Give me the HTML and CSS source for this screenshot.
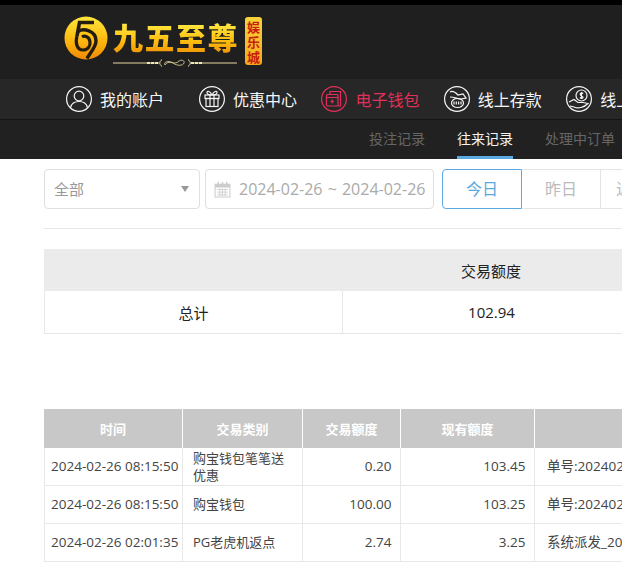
FILE: index.html
```html
<!DOCTYPE html>
<html lang="zh">
<head>
<meta charset="utf-8">
<title>往来记录</title>
<link rel="stylesheet" href="styles.css">
</head>
<body>
<div class="page">
  <header class="brand">
    <svg class="logo-mark" viewBox="0 0 44 44" width="44" height="44">
      <defs>
        <linearGradient id="g" x1="0" y1="0" x2="0" y2="1">
          <stop offset="0" stop-color="#ffe83c"/>
          <stop offset="0.55" stop-color="#fdb80f"/>
          <stop offset="1" stop-color="#f08a05"/>
        </linearGradient>
      </defs>
      <circle cx="22" cy="22" r="21.500" fill="url(#g)"/>
      <path d="M30 6.500H15.500L13 20" fill="none" stroke="#241c10" stroke-width="3.600"/>
      <path d="M14 15.500C19 12 32 14 32 25C32 31 26 37 23 42.500" fill="none" stroke="#241c10" stroke-width="3.400"/>
      <path d="M13 20C11 27 13 34 19 34C24 34 26.500 30 26 26C25.500 21 21 19 18 21" fill="none" stroke="#241c10" stroke-width="3.200"/>
    </svg>
    <div class="logo-words">
      <div class="logo-name">九五至尊</div>
      <svg class="logo-flourish" viewBox="0 0 124 8" width="124" height="8">
        <path d="M0 4H46M78 4H124" stroke="#e8d9a0" stroke-width="1"/>
        <path d="M34 4H46M78 4H90" stroke="#f3e7b5" stroke-width="2" stroke-dasharray="3 1"/>
        <path d="M49 0.500C46 3 46 5 49 7.500M75 0.500C78 3 78 5 75 7.500" fill="none" stroke="#e8d9a0"/>
        <path d="M52 6C55 0 62 7 66 2C69 0 72 2 71 4C70 7 64 7 60 4C56 1 50 3 52 6Z" fill="none" stroke="#e8d9a0" stroke-width="0.800"/>
      </svg>
    </div>
    <div class="logo-badge">娱乐城</div>
  </header>

  <nav class="main-nav">
    <a class="nav-item nav-item-first">
      <svg class="nav-icon" viewBox="0 0 26 26"><circle cx="13" cy="13" r="12.400"/><circle cx="13" cy="10" r="4.800"/><path d="M4.600 21.500C5.500 17.500 9 15.500 13 15.500S20.500 17.500 21.400 21.500"/></svg>
      <span>我的账户</span>
    </a>
    <a class="nav-item">
      <svg class="nav-icon" viewBox="0 0 26 26"><circle cx="13" cy="13" r="12.400"/><rect x="6" y="9" width="14" height="3.500"/><rect x="7" y="12.500" width="12" height="8"/><path d="M11 9V20.500M15 9V20.500M13 9C11 5 8 4.500 8 6.500S11 9 13 9C15 9 18 8.500 18 6.500S15 5 13 9"/></svg>
      <span>优惠中心</span>
    </a>
    <a class="nav-item nav-item-active">
      <svg class="nav-icon" viewBox="0 0 26 26"><circle cx="13" cy="13" r="12.400"/><path d="M9 8V5.500H19.500V20H17"/><rect x="5.500" y="8.500" width="11.500" height="11.500" rx="1"/><path d="M5.500 11.500H17M11.200 13.500V17.500M9.500 15.500H13"/></svg>
      <span>电子钱包</span>
    </a>
    <a class="nav-item">
      <svg class="nav-icon" viewBox="0 0 26 26"><circle cx="13" cy="13" r="12.400"/><path d="M6 6C9 4 12 7 14 9L19 8L22 12L17 13C14 13 10 11 6 11"/><ellipse cx="13.500" cy="17" rx="6" ry="4.500"/><path d="M10 15.500V18.500M12.300 15.500V18.500M14.600 15.500V18.500M17 15.500V18.500"/></svg>
      <span>线上存款</span>
    </a>
    <a class="nav-item">
      <svg class="nav-icon" viewBox="0 0 26 26"><circle cx="13" cy="13" r="12.400"/><circle cx="15.500" cy="9.500" r="5.500"/><path d="M15.500 6V13M17.200 7.500C16 6.500 14 7 14.200 8.500S17.200 10 17 11.500S15 12.500 13.800 11.500"/><path d="M3 16L8 13.500L12 16.500L17 16.500L22 17.500C18 21.500 12 23 8 21L4 20"/></svg>
      <span>线上取款</span>
    </a>
  </nav>

  <nav class="sub-nav">
    <a class="sub-item">投注记录</a>
    <a class="sub-item sub-item-active">往来记录</a>
    <a class="sub-item">处理中订单</a>
  </nav>

  <main class="content">
    <div class="filters">
      <div class="select">
        <span>全部</span>
        <i class="caret"></i>
      </div>
      <div class="date-range">
        <svg class="cal" viewBox="0 0 16 16" width="17" height="17">
          <path d="M1 3H15V15H1Z" fill="none" stroke="#ccc"/>
          <path d="M1 3H15V6H1Z" fill="#ccc"/>
          <path d="M4 1V4M8 1V4M12 1V4" stroke="#ccc" stroke-width="1.400"/>
          <path d="M3 8H13M3 10.500H13M3 13H13M5.500 7V14M8 7V14M10.500 7V14" stroke="#ccc" stroke-width="0.800"/>
        </svg>
        <span>2024-02-26 ~ 2024-02-26</span>
      </div>
      <div class="range-tabs">
        <div class="range-tab range-tab-on">今日</div>
        <div class="range-tab">昨日</div>
        <div class="range-tab">近七日</div>
      </div>
    </div>

    <hr class="rule">

    <table class="summary">
      <tr>
        <th></th>
        <th>交易额度</th>
      </tr>
      <tr>
        <td>总计</td>
        <td>102.94</td>
      </tr>
    </table>

    <table class="records">
      <colgroup>
        <col class="c-time"><col class="c-type"><col class="c-amount"><col class="c-balance"><col class="c-note">
      </colgroup>
      <tr>
        <th>时间</th><th>交易类别</th><th>交易额度</th><th>现有额度</th><th></th>
      </tr>
      <tr>
        <td>2024-02-26 08:15:50</td>
        <td class="type tight">购宝钱包笔笔送优惠</td>
        <td class="num">0.20</td>
        <td class="num">103.45</td>
        <td class="note">单号:20240226081550</td>
      </tr>
      <tr>
        <td>2024-02-26 08:15:50</td>
        <td class="type">购宝钱包</td>
        <td class="num">100.00</td>
        <td class="num">103.25</td>
        <td class="note">单号:20240226081550</td>
      </tr>
      <tr>
        <td>2024-02-26 02:01:35</td>
        <td class="type">PG老虎机返点</td>
        <td class="num">2.74</td>
        <td class="num">3.25</td>
        <td class="note">系统派发_20240226</td>
      </tr>
    </table>
  </main>
</div>
</body>
</html>
```

FILE: styles.css
```css
* { box-sizing: border-box; }

html, body {
  margin: 0;
  padding: 0;
  background: #fff;
  overflow: hidden;
}

body {
  font-family: "Open Sans", "Noto Sans CJK SC", sans-serif;
  width: 622px;
  height: 570px;
}

.page {
  width: 622px;
  height: 570px;
  overflow: hidden;
}

.brand {
  display: flex;
  align-items: flex-start;
  height: 79px;
  padding: 11px 0 0 64px;
  background: #1f1f1f;
  border-top: 5px solid #000;
}

.logo-mark { flex: none; }

.logo-words {
  margin-left: 5px;
  width: 128px;
}

.logo-name {
  height: 40px;
  font-family: "Noto Sans CJK SC", sans-serif;
  font-weight: 900;
  font-size: 30px;
  line-height: 40px;
  letter-spacing: 1.500px;
  white-space: nowrap;
  background: linear-gradient(#ffe840 20%, #ffc010 60%, #f09a08 90%);
  -webkit-background-clip: text;
  background-clip: text;
  color: transparent;
}

.logo-flourish {
  display: block;
  margin-top: 3px;
}

.logo-badge {
  width: 17px;
  height: 48px;
  margin: 1px 0 0 4px;
  border-radius: 3px;
  background: linear-gradient(#f9d43c, #f6a81c);
  color: #c8200c;
  font-family: "Noto Sans CJK SC", sans-serif;
  font-weight: 700;
  font-size: 13px;
  line-height: 15px;
  text-align: center;
  padding-top: 2px;
}

.main-nav {
  display: flex;
  gap: 24.400px;
  height: 41px;
  padding: 0 0 0 66px;
  align-items: center;
  background: #272727;
  border-bottom: 1px solid #151515;
  white-space: nowrap;
}

.nav-item {
  display: flex;
  flex: none;
  align-items: center;
  gap: 8px;
  font-family: "Noto Sans CJK SC", sans-serif;
  font-size: 16px;
  color: #f6f6f6;
}

.nav-item-first { margin-right: 10.600px; }

.nav-item-active { color: #e0305a; }

.nav-icon {
  flex: none;
  width: 26px;
  height: 26px;
  fill: none;
  stroke: currentColor;
  stroke-width: 1.200;
}

.sub-nav {
  display: flex;
  gap: 32px;
  height: 39px;
  padding-left: 369px;
  background: #212121;
  white-space: nowrap;
}

.sub-item {
  flex: none;
  font-family: "Noto Sans CJK SC", sans-serif;
  font-size: 14px;
  line-height: 37px;
  color: #666;
}

.sub-item-active {
  color: #f4f4f4;
  border-bottom: 3px solid #5aa9e0;
}

.content {
  width: 700px;
  padding: 10px 0 0 44px;
  color: #333;
}

.filters {
  display: flex;
  height: 40px;
}

.select, .date-range {
  display: flex;
  align-items: center;
  height: 40px;
  border: 1px solid #dfdfdf;
  border-radius: 4px;
  color: #aaa;
}

.select {
  justify-content: space-between;
  width: 156px;
  padding: 0 10px 2px 9px;
  color: #999;
  font-size: 15px;
}

.caret {
  width: 0;
  height: 0;
  margin-top: 2px;
  border-left: 4px solid transparent;
  border-right: 4px solid transparent;
  border-top: 6px solid #999;
}

.date-range {
  width: 229px;
  margin-left: 5px;
  padding-left: 8px;
  gap: 8px;
  font-size: 16px;
  word-spacing: 1px;
  white-space: nowrap;
  overflow: hidden;
}

.cal { flex: none; }

.range-tabs {
  display: flex;
  margin-left: 8px;
}

.range-tab {
  width: 79px;
  height: 40px;
  line-height: 38px;
  text-align: center;
  font-size: 16px;
  color: #bbb;
  border: 1px solid #e4e4e4;
  border-left: 0;
}

.range-tab-on {
  width: 80px;
  color: #5aa9e0;
  border: 1px solid #5aa9e0;
  border-radius: 4px 0 0 4px;
}

.rule {
  width: 578px;
  height: 1px;
  margin: 19px 0 20px;
  border: 0;
  background: #e6e6e6;
}

table {
  table-layout: fixed;
  border-collapse: separate;
  border-spacing: 0;
}

.summary {
  width: 596px;
  font-size: 15px;
  text-align: center;
}

.summary th, .summary td {
  height: 42px;
  padding: 0;
  font-weight: 400;
  color: #222;
}

.summary th { background: #ebebeb; }

.summary td {
  height: 43px;
  border-left: 1px solid #e6e6e6;
  border-bottom: 1px solid #e6e6e6;
}

.records {
  width: 700px;
  margin-top: 75px;
  font-size: 14px;
}

.c-time { width: 138px; }
.c-type { width: 120px; }
.c-amount { width: 98px; }
.c-balance { width: 134px; }
.c-note { width: 210px; }

.records th {
  height: 39px;
  padding: 0;
  background: #c8c8c8;
  color: #fff;
  font-size: 13px;
  font-weight: 700;
  border-left: 1px solid #fff;
}

.records th:first-child { border-left: 0; }

.records td {
  height: 38px;
  padding: 0 0 0 6px;
  color: #444;
  font-size: 13.500px;
  line-height: 17px;
  border-left: 1px solid #e8e8e8;
  border-bottom: 1px solid #e8e8e8;
  white-space: nowrap;
}

.records td.type {
  padding-left: 10px;
  font-size: 13px;
}

.records td.tight {
  padding-right: 10px;
  white-space: normal;
}

.records td.num {
  padding: 0 8.500px 0 0;
  text-align: right;
}

.records td.note { padding-left: 12px; }
```
